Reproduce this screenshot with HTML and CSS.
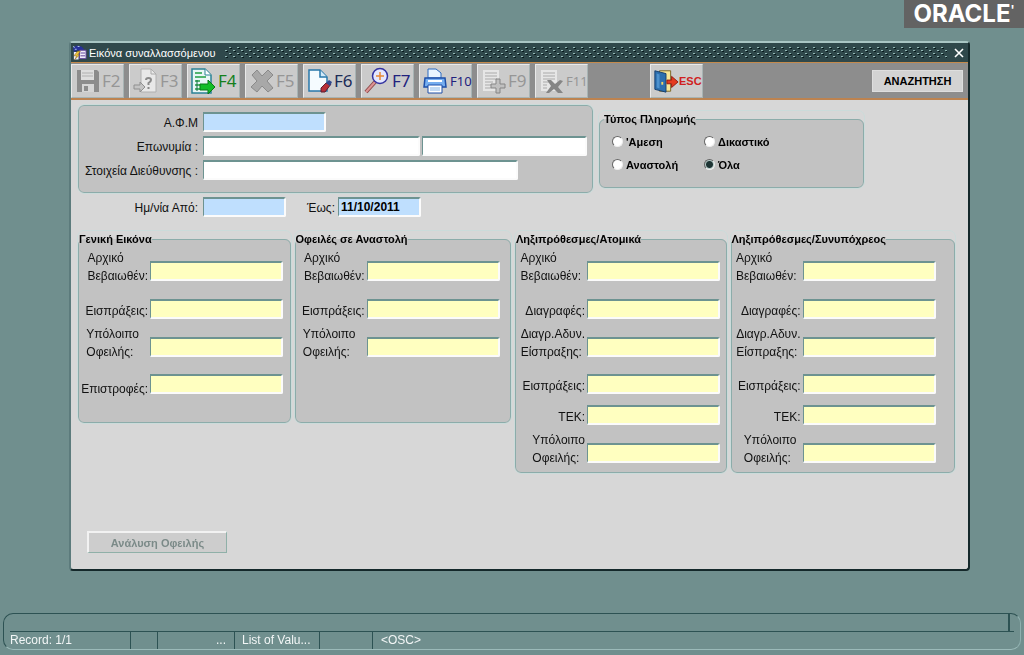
FILE: index.html
```html
<!DOCTYPE html>
<html lang="el">
<head>
<meta charset="utf-8">
<title>Εικόνα συναλλασσόμενου</title>
<link rel="stylesheet" href="styles.css">
</head>
<body>
<header class="brand"><span class="brand-logo">ORACLE<span class="brand-mark">'</span></span></header>

<main class="window">
  <div class="titlebar">
    <svg class="title-icon" viewBox="0 0 16 16" aria-hidden="true">
      <path d="M1 2l4-2 5 1 3 3-3 2-4-1-4 2z" fill="#26309a"/>
      <path d="M1 1l2 1M6 1h2M3 4h2" stroke="#b8d0f0"/>
      <path d="M2 7h5v8H2zM8 5h7v9H8z" fill="#f2ecfa"/>
      <path d="M8 5h7v9H8zM9 8h5M9 11h5" fill="none" stroke="#5b3c94"/>
      <path d="M6 6l-4 5h3l-2 4 5-5H6l3-4z" fill="#f0c43a" stroke="#7a5510" stroke-width=".5"/>
    </svg>
    <h1 class="title">Εικόνα συναλλασσόμενου</h1>
    <svg class="grip" aria-hidden="true">
      <defs>
        <pattern id="dots" width="8" height="6" patternUnits="userSpaceOnUse">
          <path d="M1 3h2v1h-2zM5 0h2v1h-2z" fill="#93b8b5"/>
          <path d="M2 4h2v1h-2zM6 1h2v1h-2z" fill="#081a1c"/>
        </pattern>
      </defs>
      <rect width="100%" height="100%" fill="url(#dots)"/>
    </svg>
    <button class="close" type="button" aria-label="Κλείσιμο">
      <svg viewBox="0 0 10 10"><path d="M1 1l8 8M9 1l-8 8" stroke="#fff" stroke-width="1.6"/></svg>
    </button>
  </div>

  <div class="toolbar">
    <button class="tool" type="button" disabled>
      <svg viewBox="0 0 28 28"><path d="M3 3h20l2 2v20H3z" fill="#8c8c8c"/><path d="M7 3h13v10H7z" fill="#dedede"/><path d="M8 6h11M8 9h11" stroke="#b0b0b0"/><path d="M8 17h12v8H8z" fill="#d6d6d6"/><path d="M10 19h4v5h-4z" fill="#8c8c8c"/></svg>
      <span>F2</span>
    </button>
    <button class="tool" type="button" disabled>
      <svg viewBox="0 0 28 28"><path d="M9 2h10l5 5v18H9z" fill="#e8e8e8" stroke="#b0b0b0"/><path d="M19 2v5h5" fill="none" stroke="#aaa"/><path d="M14 13q0-2 2.500-2t2.500 2q0 1.500-2.500 3v2M16.500 20v2" fill="none" stroke="#8a8a8a" stroke-width="2"/><path d="M2 18h6v-3l5 5-5 5v-3H2z" fill="#c4c4c4" stroke="#8f8f8f"/></svg>
      <span>F3</span>
    </button>
    <button class="tool tool-green" type="button">
      <svg viewBox="0 0 28 28"><path d="M2 2h13l6 6v18H2z" fill="#e9f6f6" stroke="#2b8296" stroke-width="1.500"/><path d="M15 2v6h6" fill="#fff" stroke="#2b8296"/><path d="M5 6h7M5 10h11M5 14h5M5 18h5M5 22h8" stroke="#22a043" stroke-width="1.500"/><path d="M10 17h8v-4l7 7-7 7v-4h-8z" fill="#12bd27" stroke="#087818"/><path d="M7 13v11" stroke="#156b45"/></svg>
      <span>F4</span>
    </button>
    <button class="tool" type="button" disabled>
      <svg viewBox="0 0 28 28"><path d="M4 8l5-5 5 6 6-6 5 5-6 6 6 7-5 4-6-6-5 6-6-5 6-6z" fill="#a8a8a8" stroke="#8a8a8a"/></svg>
      <span>F5</span>
    </button>
    <button class="tool tool-navy" type="button">
      <svg viewBox="0 0 28 28"><path d="M3 3h11l7 7v14H3z" fill="#f5fbff" stroke="#2878aa" stroke-width="1.500"/><path d="M14 3v7h7" fill="#d2eafa" stroke="#2878aa" stroke-width="1.500"/><path d="M15 21l5-5 5 1-6 8h-4z" fill="#b72f38" stroke="#5d1c30"/><path d="M20 16l3-3 3 2-2 4z" fill="#31498d"/></svg>
      <span>F6</span>
    </button>
    <button class="tool tool-blue" type="button">
      <svg viewBox="0 0 28 28"><path d="M11 15L2 25" stroke="#8e4b4b" stroke-width="4"/><path d="M11 15L2 25" stroke="#dd9494" stroke-width="2"/><circle cx="16" cy="9" r="7.500" fill="#e4e7ff" stroke="#3232a0" stroke-width="1.500"/><path d="M16 5v8M12 9h8" stroke="#e88b35" stroke-width="1.500"/></svg>
      <span>F7</span>
    </button>
    <button class="tool tool-blue tool-narrow" type="button">
      <svg viewBox="0 0 28 28"><path d="M6 11V2h8l5 4v5z" fill="#e9f5ff" stroke="#2c6ac0"/><path d="M3 11h20l1 9H2z" fill="#76aef0" stroke="#1e4fa8" stroke-width="1.500"/><path d="M6 14h14" stroke="#fff" stroke-width="2"/><path d="M6 18h14v8H6z" fill="#fff" stroke="#1e4fa8"/><path d="M8 21h10M8 23h10" stroke="#85b4e8"/></svg>
      <span>F10</span>
    </button>
    <button class="tool" type="button" disabled>
      <svg viewBox="0 0 28 28"><path d="M3 3h16v21H3z" fill="#e6e6e6"/><path d="M5 6h12M5 9h12M5 12h12M5 15h8M5 18h6M5 21h6" stroke="#aaa"/><path d="M16 12h4v5h5v4h-5v5h-4v-5h-5v-4h5z" fill="#c0c0c0" stroke="#858585"/></svg>
      <span>F9</span>
    </button>
    <button class="tool tool-narrow" type="button" disabled>
      <svg viewBox="0 0 28 28"><path d="M3 3h16v21H3z" fill="#e6e6e6"/><path d="M5 6h12M5 9h12M5 12h12M5 15h6M5 18h4M5 21h4" stroke="#aaa"/><path d="M9 13h4l4 4 5-4 3 1-5 6 5 6h-5l-4-4-5 4H8l5-7z" fill="#858585"/></svg>
      <span>F11</span>
    </button>
    <button class="tool tool-exit" type="button">
      <svg viewBox="0 0 28 28"><path d="M7 3h12v22H7z" fill="#f7e798" stroke="#77601e"/><path d="M2 3l12 3v20L2 23z" fill="#2d6fae" stroke="#163e6d"/><path d="M4 6l3 1v15l-3-1z" fill="#4e92ce"/><path d="M10 15v3" stroke="#f5d664" stroke-width="2"/><path d="M15 13h5V9l7 6-7 6v-4h-5z" fill="#e53a1e" stroke="#8f1c10"/></svg>
      <span>ESC</span>
    </button>
    <button class="search" type="button">ΑΝΑΖΗΤΗΣΗ</button>
  </div>

  <form class="content">
    <div class="criteria">
      <div class="criteria-left">
        <div class="box identity">
          <div class="line"><label for="afm">Α.Φ.Μ</label><input class="field blue w-afm" id="afm" type="text" autofocus></div>
          <div class="line"><label for="name">Επωνυμία :</label><input class="field w-name" id="name" type="text"><input class="field w-first" type="text" aria-label="Όνομα"></div>
          <div class="line"><label for="address">Στοιχεία Διεύθυνσης :</label><input class="field w-address" id="address" type="text"></div>
        </div>
        <div class="line dates">
          <label for="from">Ημ/νία Από:</label><input class="field blue w-date" id="from" type="text">
          <label class="until" for="to">Έως:</label><input class="field blue w-date" id="to" type="text" value="11/10/2011">
        </div>
      </div>
      <fieldset class="box payment">
        <legend>Τύπος Πληρωμής</legend>
        <label><input type="radio" name="type">'Αμεση</label>
        <label><input type="radio" name="type">Δικαστικό</label>
        <label><input type="radio" name="type">Αναστολή</label>
        <label><input type="radio" name="type" checked>Όλα</label>
      </fieldset>
    </div>

    <div class="panels">
      <fieldset class="box panel short">
        <legend>Γενική Εικόνα</legend>
        <label for="g1">Αρχικό<br>Βεβαιωθέν:</label><input class="field yellow" id="g1" type="text">
        <label class="single" for="g2">Εισπράξεις:</label><input class="field yellow" id="g2" type="text">
        <label class="inset" for="g3">Υπόλοιπο<br>Οφειλής:</label><input class="field yellow" id="g3" type="text">
        <label for="g4">Επιστροφές:</label><input class="field yellow" id="g4" type="text">
      </fieldset>
      <fieldset class="box panel short">
        <legend>Οφειλές σε Αναστολή</legend>
        <label for="s1">Αρχικό<br>Βεβαιωθέν:</label><input class="field yellow" id="s1" type="text">
        <label class="single" for="s2">Εισπράξεις:</label><input class="field yellow" id="s2" type="text">
        <label class="inset" for="s3">Υπόλοιπο<br>Οφειλής:</label><input class="field yellow" id="s3" type="text">
      </fieldset>
      <fieldset class="box panel tall">
        <legend>Ληξιπρόθεσμες/Ατομικά</legend>
        <label class="nudge" for="a1">Αρχικό<br>Βεβαιωθέν:</label><input class="field yellow" id="a1" type="text">
        <label class="single" for="a2">Διαγραφές:</label><input class="field yellow" id="a2" type="text">
        <label for="a3">Διαγρ.Αδυν.<br>Είσπραξης:</label><input class="field yellow" id="a3" type="text">
        <label class="single" for="a4">Εισπράξεις:</label><input class="field yellow" id="a4" type="text">
        <label class="single" for="a5">ΤΕΚ:</label><input class="field yellow" id="a5" type="text">
        <label for="a6">Υπόλοιπο<br>Οφειλής:</label><input class="field yellow" id="a6" type="text">
      </fieldset>
      <fieldset class="box panel tall">
        <legend>Ληξιπρόθεσμες/Συνυπόχρεος</legend>
        <label class="nudge" for="c1">Αρχικό<br>Βεβαιωθέν:</label><input class="field yellow" id="c1" type="text">
        <label class="single" for="c2">Διαγραφές:</label><input class="field yellow" id="c2" type="text">
        <label for="c3">Διαγρ.Αδυν.<br>Είσπραξης:</label><input class="field yellow" id="c3" type="text">
        <label class="single" for="c4">Εισπράξεις:</label><input class="field yellow" id="c4" type="text">
        <label class="single" for="c5">ΤΕΚ:</label><input class="field yellow" id="c5" type="text">
        <label class="nudge" for="c6">Υπόλοιπο<br>Οφειλής:</label><input class="field yellow" id="c6" type="text">
      </fieldset>
    </div>

    <button class="analysis" type="button" disabled>Ανάλυση Οφειλής</button>
  </form>
</main>

<footer class="status">
  <div class="message"></div>
  <div class="cells">
    <span class="cell c-record">Record: 1/1</span>
    <span class="cell c-mini"></span>
    <span class="cell c-dots">...</span>
    <span class="cell c-list">List of Valu...</span>
    <span class="cell c-gap"></span>
    <span class="cell c-osc">&lt;OSC&gt;</span>
  </div>
</footer>
</body>
</html>
```
FILE: styles.css
```css
* { box-sizing: border-box; }

body {
  margin: 0;
  min-height: 100vh;
  display: flex;
  flex-direction: column;
  background: #708f8e;
  color: #111;
  font: 12px/18px "Liberation Sans", Arial, sans-serif;
}

button, input { font: inherit; color: inherit; }

.brand { display: flex; justify-content: flex-end; }
.brand-logo {
  width: 120px;
  height: 28px;
  background: #636363;
  color: #fff;
  font: bold 24px/28px Inter, sans-serif;
  text-align: center;
  white-space: nowrap;
}
.brand-mark { font-size: 12px; vertical-align: top; line-height: 20px; }

/* Window frame */
.window {
  flex: 1;
  display: flex;
  flex-direction: column;
  margin: 13px 54px 42px 69px;
  background: #d7d7d7;
  border: 2px solid #14282a;
  border-top-color: #a9c6c4;
  border-left: 2px solid #5c7b7c;
  border-radius: 4px;
}

.titlebar {
  display: flex;
  align-items: center;
  height: 20px;
  padding: 0 3px 0 1px;
  background: #2f484b;
  border-bottom: 1px solid #c48a4c;
}
.title-icon { width: 15px; height: 16px; }
.title { margin: 0 8px 0 2px; color: #fff; font-size: 11px; font-weight: normal; }
.grip { flex: 1; height: 12px; }
.close { width: 12px; height: 12px; margin-left: 6px; padding: 1px; border: 0; background: none; display: flex; }
.close svg { width: 10px; height: 10px; }

/* Toolbar */
.toolbar {
  display: flex;
  align-items: center;
  gap: 5px;
  height: 37px;
  padding: 0 5px 0 0;
  background: #8d8d8d;
  border-bottom: 2px solid #bd8350;
}
.tool {
  display: flex;
  align-items: center;
  width: 53px;
  height: 34px;
  padding: 0 0 0 2px;
  border: 1px solid #e9e9e9;
  border-right-color: #a8b4b4;
  border-bottom-color: #a8b4b4;
  background: #cbcbcb;
  color: #969696;
  font: 17px/28px "Noto Sans", sans-serif;
}
.tool svg { width: 28px; height: 28px; flex: none; }
.tool-green { color: #14801c; }
.tool-navy { color: #1c2c58; }
.tool-blue { color: #22227e; }
.tool-narrow { font-size: 13px; }
.tool-exit { margin-left: 57px; color: #d02020; font: bold 11px/28px "Liberation Sans", sans-serif; }
.tool-exit svg { width: 26px; }
.search {
  width: 91px;
  height: 22px;
  margin-left: auto;
  padding: 0;
  border: 1px solid #dedede;
  background: #d3d3d3;
  color: #000;
  font-size: 11px;
  font-weight: bold;
}

/* Form */
.content { flex: 1; display: flex; flex-direction: column; padding: 5px 13px 16px 7px; }
.box { margin: 0; border: 1px solid #8cacaa; border-radius: 6px; background: #c2c2c2; outline: 1px solid #cbdbda; }
legend { padding: 0; color: #000; font-weight: bold; font-size: 11px; line-height: 16px; }

.field {
  height: 20px;
  padding: 0 2px;
  border: 2px solid #fbfbfb;
  border-top: 2px solid #6d9391;
  border-left: 1px solid #6d9391;
  border-radius: 0 2px 2px 0;
  outline: 0;
  background: #fff;
}
.blue { background: #bfdffe; }
.yellow { background: #ffffc0; }
.w-afm { width: 123px; }
.w-name { width: 217px; }
.w-first { width: 165px; }
.w-address { width: 315px; }
.w-date { width: 83px; font-weight: bold; color: #000; }

.criteria { display: flex; align-items: flex-start; gap: 6px; }
.criteria-left { width: 515px; }
.identity { height: 88px; padding-top: 5px; display: flex; flex-direction: column; gap: 3px; }
.line { display: flex; align-items: center; gap: 2px; height: 21px; }
.line label { width: 119px; margin-right: 3px; text-align: right; white-space: nowrap; padding-top: 3px; }
.dates { margin-top: 3px; padding-left: 1px; }
.dates .until { width: 47px; margin-right: 1px; }

.payment {
  display: grid;
  grid-template-columns: 92px 1fr;
  grid-auto-rows: 23px;
  width: 265px;
  height: 77px;
  margin-top: 6px;
  padding: 3px 12px 12px;
}
.payment legend { margin-left: -8px; }
.payment label { display: flex; align-items: center; gap: 3px; font-weight: bold; font-size: 11px; color: #000; }
.payment input {
  appearance: none;
  width: 11px;
  height: 11px;
  margin: 0;
  border: 1px solid #eee;
  border-top-color: #666;
  border-left-color: #666;
  border-radius: 50%;
  background: #fff;
}
.payment input:checked { background: radial-gradient(circle, #1d3434 0 3px, #b5cac8 4px); }

.panels {
  display: grid;
  grid-template-columns: 213fr 217fr 212fr 225fr;
  gap: 4px;
  align-items: start;
  margin-top: 14px;
}
.panel {
  display: grid;
  grid-template-columns: 70px 133px;
  column-gap: 1px;
  grid-template-rows: 38px 38px 38px 37px;
  align-items: end;
  min-width: 0;
  padding: 0;
}
.short { height: 192px; }
.tall { grid-template-rows: 38px 38px 38px 37px 31px 38px; height: 242px; }
.panel label { justify-self: end; padding-right: 1px; white-space: nowrap; }
.panel .inset { padding-right: 10px; }
.panel .nudge { padding-right: 5px; }
.panel .single { padding-bottom: 3px; }
.panel .field { width: 133px; margin-bottom: 4px; }

.analysis {
  width: 140px;
  height: 22px;
  margin: auto 0 0 9px;
  padding: 0;
  border: 1px solid #8fb0a8;
  border-top: 2px solid #f2f2f2;
  border-left: 2px solid #f2f2f2;
  background: #cdcdcd;
  color: #7b8a88;
  font-weight: bold;
  font-size: 11px;
}

/* Status bar */
.status {
  margin: 0 3px 5px;
  height: 37px;
  padding: 0 6px;
  border: 1px solid #2d5253;
  border-right-color: #8fb0af;
  border-bottom-color: #9bbab9;
  border-radius: 10px;
  color: #f2f6f6;
}
.message { height: 17px; margin-right: 4px; border-right: 2px solid #2d5253; }
.cells { display: flex; height: 18px; border-top: 1px solid #2d5253; }
.cell { border-right: 1px solid #2d5253; line-height: 17px; white-space: nowrap; }
.c-record { width: 121px; }
.c-mini { width: 27px; }
.c-dots { width: 77px; padding-right: 8px; text-align: right; }
.c-list { width: 85px; padding-left: 7px; }
.c-gap { width: 53px; }
.c-osc { border: 0; padding-left: 8px; }
```
